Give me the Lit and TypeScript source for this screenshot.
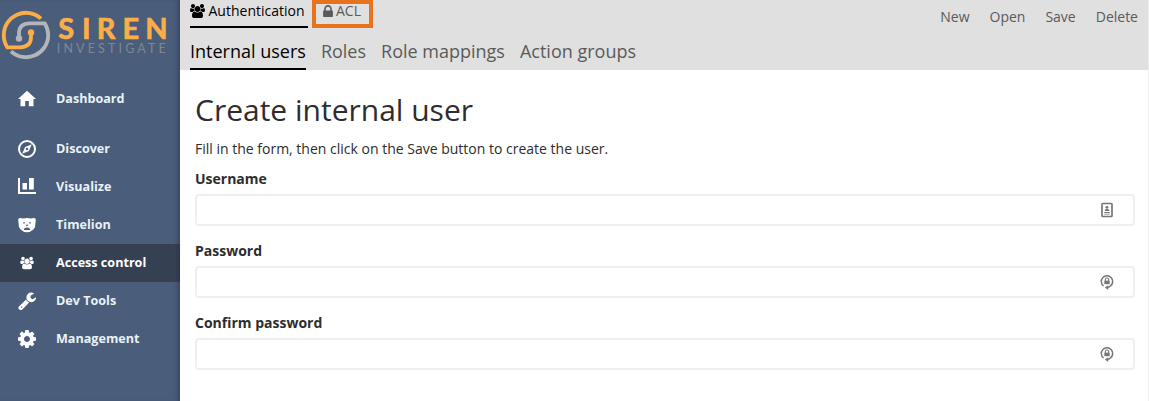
import { LitElement, html, svg, css } from "lit";
import { customElement } from "lit/decorators.js";

const USERS = "M593 896q-162 5-265 128h-134q-82 0-138-40.5t-56-118.5q0-353 124-353 6 0 43.5 21t97.5 42.5 119 21.5q67 0 133-23-5 37-5 66 0 139 81 256zm1071 637q0 120-73 189.5t-194 69.5h-874q-121 0-194-69.5t-73-189.5q0-53 3.5-103.5t14-109 26.5-108.5 43-97.5 62-81 85.5-53.5 111.5-20q10 0 43 21.5t73 48 107 48 135 21.5 135-21.5 107-48 73-48 43-21.5q61 0 111.5 20t85.5 53.5 62 81 43 97.5 26.5 108.5 14 109 3.5 103.5zm-1024-1277q0 106-75 181t-181 75-181-75-75-181 75-181 181-75 181 75 75 181zm704 384q0 159-112.5 271.5t-271.5 112.5-271.5-112.5-112.5-271.5 112.5-271.5 271.5-112.5 271.5 112.5 112.5 271.5zm576 225q0 78-56 118.5t-138 40.5h-134q-103-123-265-128 81-117 81-256 0-29-5-66 66 23 133 23 59 0 119-21.5t97.5-42.5 43.5-21q124 0 124 353zm-128-609q0 106-75 181t-181 75-181-75-75-181 75-181 181-75 181 75 75 181z";
const LOCK = "M640 768h512v-192q0-106-75-181t-181-75-181 75-75 181v192zm832 96v576q0 40-28 68t-68 28h-960q-40 0-68-28t-28-68v-576q0-40 28-68t68-28h32v-192q0-184 132-316t316-132 316 132 132 316v192h32q40 0 68 28t28 68z";
const WRENCH = "M448 1472q0-26-19-45t-45-19-45 19-19 45 19 45 45 19 45-19 19-45zm644-420l-682 682q-37 37-90 37-52 0-91-37l-106-108q-38-36-38-90 0-53 38-91l681-681q39 98 114.5 173.5t173.5 114.5zm634-435q0 39-23 106-47 134-164.5 217.5t-258.5 83.5q-185 0-316.5-131.5t-131.5-316.5 131.5-316.5 316.5-131.5q58 0 121.5 16.5t107.5 46.5q16 11 16 28t-16 28l-293 169v224l193 107q5-3 79-48.5t135.5-81 70.5-35.5q15 0 23.5 10t8.5 25z";
const COG = "M1152 896q0-106-75-181t-181-75-181 75-75 181 75 181 181 75 181-75 75-181zm512-109v222q0 12-8 23t-20 13l-185 28q-19 54-39 91 35 50 107 138 10 12 10 25t-9 23q-27 37-99 108t-94 71q-12 0-26-9l-138-108q-44 23-91 38-16 136-29 186-7 28-36 28h-222q-14 0-24.5-8.5t-11.5-21.5l-28-184q-49-16-90-37l-141 107q-10 9-25 9-14 0-25-11-126-114-165-168-7-10-7-23 0-12 8-23 15-21 51-66.5t54-70.5q-27-50-41-99l-183-27q-13-2-21-12.5t-8-23.5v-222q0-12 8-23t19-13l186-28q14-46 39-92-40-57-107-138-10-12-10-24 0-10 9-23 26-36 98.5-107.5t94.5-71.5q13 0 26 10l138 107q44-23 91-38 16-136 29-186 7-28 36-28h222q14 0 24.5 8.5t11.5 21.5l28 184q49 16 90 37l142-107q9-9 24-9 13 0 25 10 129 119 165 170 7 8 7 22 0 12-8 23-15 21-51 66.5t-54 70.5q26 50 41 98l183 28q13 2 21 12.5t8 23.5z";

// Sidebar glyphs share an 18 x 18 box.
const glyphs: Record<string, unknown> = {
  home: svg`<path d="M9 .7 0 8.900h2.500v7.300h4.700v-5.200h3.600v5.200h4.700V8.900H18z"/>`,
  compass: svg`<circle cx="9" cy="9" r="8" fill="none" stroke="#fff" stroke-width="2"/><path fill-rule="evenodd" d="M13.800 4.200 10.900 10.900 4.200 13.800 7.100 7.100zM9 7.800a1.200 1.200 0 1 0 0 2.400 1.200 1.200 0 0 0 0-2.400z"/>`,
  chart: svg`<path d="M0 0h2v14h16v2H0zM4.500 5h4.500v6.500H4.500zM11 0h4.800v11.500H11z"/>`,
  bear: svg`<path fill-rule="evenodd" d="M.2 4.200Q0 2 2.200 2q1.500 0 2.500 .5Q9 1.300 13.300 2.500 14.300 2 15.800 2 18 2 17.800 4.200L17.300 8.500Q17.700 11.500 15.400 13.500 12.500 16.300 9 16.300T2.600 13.500Q.3 11.500 .7 8.500zM5.200 6.300v1.200h1.600V6.300zM11.200 6.300v1.200h1.600V6.300zM7.300 8.800 9 10.200l1.700-1.400zM6 12.700q3-2.500 6 0v1.200H6z"/>`,
  users: svg`<path transform="translate(2.300 2.800) scale(.007)" d=${USERS} />`,
  wrench: svg`<path transform="translate(-.6 -.8) scale(.0108)" d=${WRENCH} />`,
  cog: svg`<path transform="translate(-1.500 -1.500) scale(.01172)" d=${COG} />`,
};

const nav = [
  ["home", "Dashboard"], ["compass", "Discover"], ["chart", "Visualize"], ["bear", "Timelion"],
  ["users", "Access control"], ["wrench", "Dev Tools"], ["cog", "Management"],
];

@customElement("siren-sidebar")
class SirenSidebar extends LitElement {
  static styles = css`
    :host { display: block; width: 180px; height: 401px; flex: none; background: #4a5d7b; box-shadow: inset -5px 0 5px -3px rgba(20, 30, 50, .4); }
    .logo { display: block; width: 180px; height: 80px; }
    .name { font: 700 29px Lato, sans-serif; fill: #fbae47; stroke: #fbae47; stroke-width: .7px; }
    .product { font: 400 12.500px Lato, sans-serif; fill: #7f8892; }
    .item { display: flex; align-items: center; height: 38px; padding-left: 18px; gap: 20px; color: #e8f2f5; font-weight: 700; font-size: 12.600px; line-height: 18px; }
    .item.first { margin-bottom: 12px; }
    .item.active { background: linear-gradient(90deg, transparent 175px, rgba(20, 30, 50, .25)), #354052; color: #fff; }
    .glyph { width: 18px; height: 18px; fill: #fff; flex: none; }
    .label { white-space: nowrap; }
  `;
  render() {
    return html`
      <svg class="logo" viewBox="0 0 180 80">
        <g fill="none" stroke-width="3.800">
          <path stroke="#fbae47" d="M41 18.600A22.200 22.200 0 0 0 3.800 35 22.200 22.200 0 0 0 7.300 47.300H20q11-.3 11-10V33"/>
          <path stroke="#b3b6b9" d="M11 51.400A22.200 22.200 0 0 0 48.200 35 22.200 22.200 0 0 0 44.700 23.300H30Q19 23.600 19 33V38"/>
        </g>
        <circle cx="31" cy="32.500" r="3.200" fill="#fbae47"/><circle cx="19" cy="38.500" r="3.200" fill="#b3b6b9"/>
        <text class="name" x="58.200 82 96.800 122.600 145.200" y="39.300">SIREN</text>
        <text class="product" x="56.800" y="52.700" textLength="109">INVESTIGATE</text>
      </svg>
      <nav>
        ${nav.map(([icon, label], i) => html`
          <div class="item ${i === 0 ? "first" : ""} ${icon === "users" ? "active" : ""}">
            <svg class="glyph" viewBox="0 0 18 18">${glyphs[icon]}</svg><span class="label">${label}</span>
          </div>`)}
      </nav>`;
  }
}

@customElement("app-root")
class AppRoot extends LitElement {
  static styles = css`
    :host { display: flex; width: 1149px; height: 401px; overflow: hidden; background: #fff; font-family: "Open Sans", sans-serif; font-size: 14px; line-height: 20px; color: #2d2d2d; }
    .main { flex: 1; min-width: 0; border-right: 1px solid #eee; }
    .header { height: 70px; background: #e0e0e0; display: flex; justify-content: space-between; box-sizing: border-box; padding: 0 10px; color: #5a5a5a; }
    .tabs { display: flex; gap: 4px; height: 28px; box-sizing: border-box; }
    .tab { display: flex; height: 26px; box-sizing: border-box; padding: 1px 3.500px 0 0; gap: 3.500px; white-space: nowrap; }
    .tab.active { color: #000; border-bottom: 2px solid #000; height: 28px; }
    .tab.marked { border: 4px solid #e8731f; height: 28px; width: 61px; padding: 0 0 0 7px; gap: 3px; line-height: 14px; }
    .tab svg { fill: currentColor; flex: none; }
    .users { width: 15px; height: 14px; margin-top: 3px; }
    .lock { width: 10px; height: 12px; margin-top: 1px; }
    .subtabs { display: flex; gap: 15px; font-size: 18px; height: 42px; }
    .subtab { line-height: 46px; box-sizing: border-box; height: 42px; white-space: nowrap; }
    .subtab.active { color: #000; border-bottom: 2px solid #000; }
    .actions { display: flex; gap: 20px; padding-top: 7px; }
    .content { padding: 23px 13px 0 15px; }
    h1 { margin: 0; font-size: 30px; font-weight: 400; line-height: 33px; }
    p { margin: 13px 0 10px; }
    label { display: block; font-weight: 700; margin-bottom: 5px; }
    .field { display: flex; align-items: center; justify-content: flex-end; height: 32px; box-sizing: border-box; border: 2px solid #ecf0f0; border-radius: 4px; padding-right: 18px; margin-bottom: 15px; }
    .field svg { width: 16px; height: 18px; }
  `;
  private field(label: string, glyph: unknown) {
    return html`<label>${label}</label><div class="field"><svg viewBox="0 0 16 18">${glyph}</svg></div>`;
  }
  private badge = svg`<rect x="3" y="2.500" width="10" height="13" rx=".8" fill="#fff" stroke="#777" stroke-width="1.700"/><circle cx="8" cy="6.300" r="1.400" fill="#777"/><path fill="#777" d="M5.800 10V9q2.200-2.500 4.400 0v1zM5.300 11h5.400v.9H5.300zM5.300 12.700h5.400v.9H5.300z"/>`;
  private reset = svg`<path d="M4.600 13A5.700 5.700 0 1 1 11.500 12.900Q10.500 14.200 8.500 14.500" fill="none" stroke="#777" stroke-width="1.500"/><path fill="#777" d="m5.800 14.500 3.400-2.300v4.800z"/><path d="M6.400 8V6.600a1.600 1.600 0 0 1 3.200 0V8" fill="none" stroke="#777" stroke-width="1.100"/><path fill="#777" d="M5.300 7.700h5.400v3.500H5.300z"/>`;
  render() {
    return html`
      <siren-sidebar></siren-sidebar>
      <div class="main">
        <div class="header">
          <div>
            <div class="tabs">
              <div class="tab active"><svg class="users" viewBox="0 0 1920 1792"><path d=${USERS} /></svg>Authentication</div>
              <div class="tab marked"><svg class="lock" viewBox="320 128 1152 1408"><path d=${LOCK} /></svg>ACL</div>
            </div>
            <div class="subtabs">
              <div class="subtab active">Internal users</div><div class="subtab">Roles</div><div class="subtab">Role mappings</div><div class="subtab">Action groups</div>
            </div>
          </div>
          <div class="actions"><span>New</span><span>Open</span><span>Save</span><span>Delete</span></div>
        </div>
        <div class="content">
          <h1>Create internal user</h1>
          <p>Fill in the form, then click on the Save button to create the user.</p>
          ${this.field("Username", this.badge)}
          ${this.field("Password", this.reset)}
          ${this.field("Confirm password", this.reset)}
        </div>
      </div>`;
  }
}
